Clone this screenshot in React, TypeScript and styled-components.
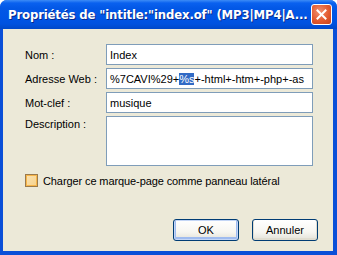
import React from "react";
import styled, { createGlobalStyle } from "styled-components";

const Global = createGlobalStyle`
  html, body { margin: 0; padding: 0; background: #ffffff; }
  body { font-family: "Liberation Sans", Arial, sans-serif; }
`;

const Window = styled.div`
  width: 337px;
  height: 255px;
  box-sizing: border-box;
  display: flex;
  flex-direction: column;
  background: #0a4fd8;
  border-radius: 7px 7px 0 0;
  overflow: hidden;
`;

const TitleBar = styled.div`
  height: 29px;
  flex: none;
  display: flex;
  align-items: center;
  padding: 0 5px 0 8px;
  box-sizing: border-box;
  background: linear-gradient(
    to bottom,
    #3d8cf6 0px,
    #0a61ef 3px,
    #0358e6 8px,
    #0055e5 18px,
    #0052df 24px,
    #0048c8 29px
  );
`;

const Title = styled.div`
  flex: 1;
  color: #ffffff;
  font-family: "DejaVu Sans", sans-serif;
  font-weight: bold;
  font-size: 11.7px;
  letter-spacing: -0.15px;
  white-space: nowrap;
  text-shadow: 1px 1px 0 #0a2a8a;
`;

const CloseButton = styled.div`
  width: 21px;
  height: 21px;
  box-sizing: border-box;
  border: 1px solid #ffffff;
  border-radius: 3px;
  background: radial-gradient(circle at 40% 35%, #f29172 0%, #e35a2f 55%, #c5421d 100%);
  display: flex;
  align-items: center;
  justify-content: center;
`;

const Body = styled.div`
  flex: 1;
  margin: 0 4px 4px 3px;
  background: #ece9d8;
  display: flex;
  flex-direction: column;
  padding: 15px 0 0 22px;
  box-sizing: border-box;
`;

const Form = styled.div`
  display: grid;
  grid-template-columns: 81px 207px;
  row-gap: 3px;
`;

const Label = styled.div<{ $top?: boolean }>`
  font-size: 11px;
  color: #000;
  display: flex;
  align-items: ${(p) => (p.$top ? "flex-start" : "center")};
  padding-top: ${(p) => (p.$top ? "2px" : "0")};
`;

const Field = styled.div<{ $tall?: boolean }>`
  height: ${(p) => (p.$tall ? "50px" : "21px")};
  box-sizing: border-box;
  border: 1px solid #7f9db9;
  background: #ffffff;
  font-size: 11px;
  color: #000;
  padding: 0 3px;
  display: flex;
  align-items: center;
  white-space: nowrap;
  overflow: hidden;
`;

const Selected = styled.span`
  background: #316ac5;
  color: #ffffff;
`;

const CheckRow = styled.div`
  margin-top: 8px;
  display: flex;
  align-items: center;
  gap: 5px;
  font-size: 11px;
  letter-spacing: -0.1px;
  color: #000;
`;

const CheckBox = styled.div`
  width: 13px;
  height: 13px;
  box-sizing: border-box;
  border: 1px solid #9a7a4c;
  background: linear-gradient(135deg, #fbe3b1 0%, #f6d28c 100%);
  box-shadow: inset 0 0 0 1px #f7b64a;
`;

const Buttons = styled.div`
  margin-top: 32px;
  display: flex;
  justify-content: flex-end;
  gap: 13px;
  padding-right: 15px;
`;

const Button = styled.div<{ $default?: boolean }>`
  width: 66px;
  height: 22px;
  box-sizing: border-box;
  border: 1px solid #003c74;
  border-radius: 3px;
  background: linear-gradient(to bottom, #ffffff 0%, #f7f6f1 60%, #e3e1d8 100%);
  box-shadow: ${(p) =>
    p.$default
      ? "inset 0 0 0 1px #c4d6f6, inset 0 -1px 0 2px #9fbbef"
      : "inset 0 -1px 0 1px #e0ddd0"};
  font-size: 11px;
  color: #000;
  display: flex;
  align-items: center;
  justify-content: center;
`;

export default function App() {
  return (
    <>
      <Global />
      <Window>
        <TitleBar>
          <Title>Propriétés de "intitle:"index.of" (MP3|MP4|A...</Title>
          <CloseButton>
            <svg width="11" height="11" viewBox="0 0 11 11">
              <path d="M1.5 1.5 L9.5 9.5 M9.5 1.5 L1.5 9.5" stroke="#fff" strokeWidth="2" strokeLinecap="square" />
            </svg>
          </CloseButton>
        </TitleBar>
        <Body>
          <Form>
            <Label>Nom :</Label>
            <Field>Index</Field>
            <Label>Adresse Web :</Label>
            <Field>
              %7CAVI%29+<Selected>%s</Selected>+-html+-htm+-php+-as
            </Field>
            <Label>Mot-clef :</Label>
            <Field>musique</Field>
            <Label $top>Description :</Label>
            <Field $tall />
          </Form>
          <CheckRow>
            <CheckBox />
            <span>Charger ce marque-page comme panneau latéral</span>
          </CheckRow>
          <Buttons>
            <Button $default>OK</Button>
            <Button>Annuler</Button>
          </Buttons>
        </Body>
      </Window>
    </>
  );
}
